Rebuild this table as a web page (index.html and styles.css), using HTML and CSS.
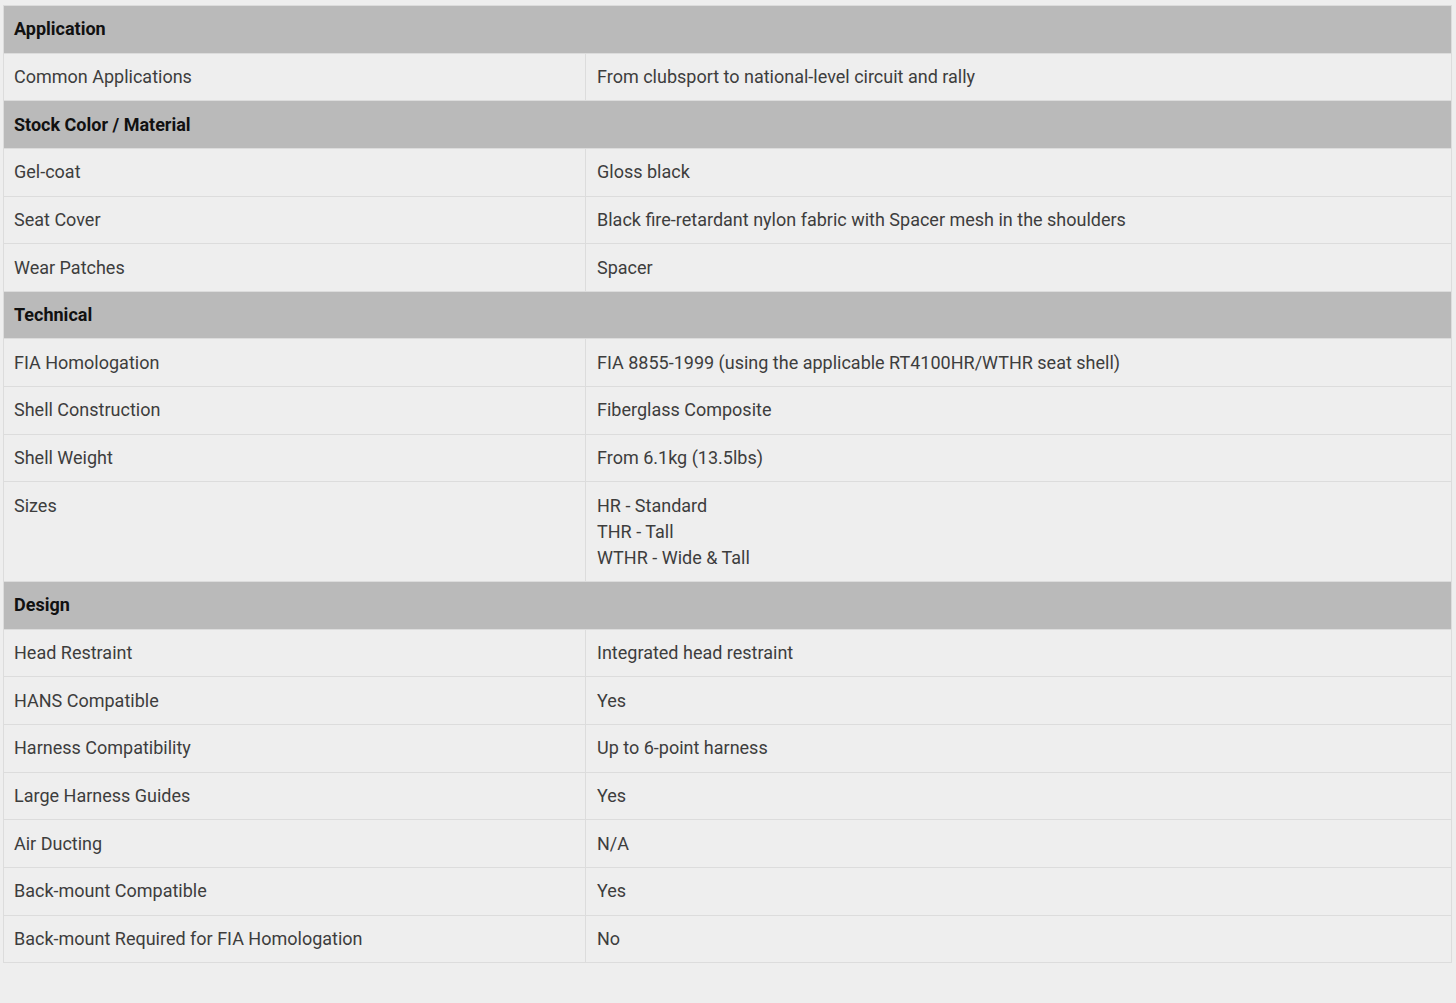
FILE: index.html
```html
<!DOCTYPE html>
<html>
<head>
<meta charset="utf-8">
<link rel="stylesheet" href="styles.css">
</head>
<body>
<table class="specs">
  <colgroup><col class="label-col"><col class="value-col"></colgroup>
  <tr class="group"><th colspan="2">Application</th></tr>
  <tr><td>Common Applications</td><td>From clubsport to national-level circuit and rally</td></tr>
  <tr class="group"><th colspan="2">Stock Color / Material</th></tr>
  <tr><td>Gel-coat</td><td>Gloss black</td></tr>
  <tr><td>Seat Cover</td><td>Black fire-retardant nylon fabric with Spacer mesh in the shoulders</td></tr>
  <tr><td>Wear Patches</td><td>Spacer</td></tr>
  <tr class="group"><th colspan="2">Technical</th></tr>
  <tr><td>FIA Homologation</td><td>FIA 8855-1999 (using the applicable RT4100HR/WTHR seat shell)</td></tr>
  <tr><td>Shell Construction</td><td>Fiberglass Composite</td></tr>
  <tr><td>Shell Weight</td><td>From 6.1kg (13.5lbs)</td></tr>
  <tr><td>Sizes</td><td>HR - Standard<br>THR - Tall<br>WTHR - Wide &amp; Tall</td></tr>
  <tr class="group"><th colspan="2">Design</th></tr>
  <tr><td>Head Restraint</td><td>Integrated head restraint</td></tr>
  <tr><td>HANS Compatible</td><td>Yes</td></tr>
  <tr><td>Harness Compatibility</td><td>Up to 6-point harness</td></tr>
  <tr><td>Large Harness Guides</td><td>Yes</td></tr>
  <tr><td>Air Ducting</td><td>N/A</td></tr>
  <tr><td>Back-mount Compatible</td><td>Yes</td></tr>
  <tr><td>Back-mount Required for FIA Homologation</td><td>No</td></tr>
</table>
</body>
</html>
```
FILE: styles.css
```css
html, body {
  margin: 0;
  background: #eeeeee;
}
body {
  padding: 5px 4px 0 3px;
  font-family: Roboto, "Liberation Sans", sans-serif;
  font-size: 18px;
  line-height: 26px;
  color: #3d3d3d;
}
.specs {
  width: 1449px;
  border-collapse: collapse;
  border: 1px solid #dcdcdc;
  table-layout: fixed;
}
.label-col {
  width: 582px;
}
.specs td {
  border: 1px solid #dcdcdc;
  padding: 10.3px 11px 10.35px 11px;
  vertical-align: top;
  text-align: left;
}
.specs td:first-child {
  padding-left: 10px;
}
.specs .group th {
  background: #bababa;
  color: #111111;
  font-weight: 700;
  text-align: left;
  padding: 10.3px 10px 10.35px 10px;
  border: 1px solid #dcdcdc;
}
```
